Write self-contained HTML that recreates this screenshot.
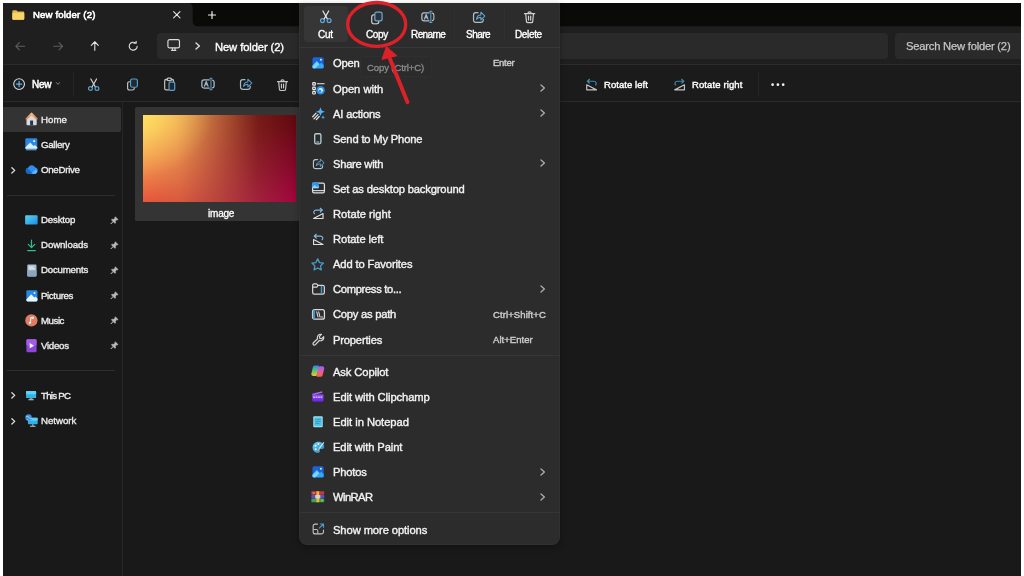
<!DOCTYPE html>
<html>
<head>
<meta charset="utf-8">
<title>New folder (2)</title>
<style>
html,body{margin:0;padding:0;background:#ffffff;}
body{width:1024px;height:576px;overflow:hidden;font-family:"Liberation Sans",sans-serif;}
#root{position:relative;width:1024px;height:576px;overflow:hidden;background:#ffffff;}
.a{position:absolute;}
.tx{position:absolute;height:20px;line-height:20px;white-space:pre;font-family:"Liberation Sans",sans-serif;will-change:transform;-webkit-text-stroke:0.3px currentColor;}
svg{position:absolute;overflow:visible;}
</style>
</head>

<body>
<div id="root">
<!-- window background -->
<div class="a" style="left:3px;top:3px;width:1018px;height:573px;background:#191919;"></div>
<!-- title bar -->
<div class="a" style="left:3px;top:3px;width:1018px;height:24px;background:#1f1f1f;"></div>
<!-- active tab -->
<svg style="left:0;top:0;" width="1024" height="30" viewBox="0 0 1024 30"><path d="M188,3 H1021 V26.3 H197.2 A4.5 4.5 0 0 1 192.7,21.8 V7.5 A4.5 4.5 0 0 0 188.2,3 Z" fill="#0a0a09"/></svg>
<!-- address row -->
<div class="a" style="left:3px;top:26.5px;width:1018px;height:37.5px;background:#1f1f1f;"></div>
<div class="a" style="left:157px;top:33px;width:731px;height:25.5px;background:#2a2a2a;border-radius:4px;"></div>
<div class="a" style="left:894.5px;top:33px;width:126.5px;height:25.5px;background:#2a2a2a;border-radius:4px 0 0 4px;"></div>
<div class="a" style="left:3px;top:64px;width:1018px;height:1px;background:#2b2b2b;"></div>
<!-- toolbar -->
<div class="a" style="left:3px;top:65px;width:1018px;height:36px;background:#1b1b1b;"></div>
<div class="a" style="left:3px;top:101px;width:1018px;height:1px;background:#2a2a2a;"></div>
<div class="a" style="left:73px;top:72px;width:1px;height:24px;background:#252525;"></div>
<div class="a" style="left:757.5px;top:72px;width:1px;height:24px;background:#252525;"></div>
<!-- sidebar -->
<div class="a" style="left:3px;top:102px;width:119px;height:474px;background:#191919;"></div>
<div class="a" style="left:122px;top:102px;width:1px;height:474px;background:#262626;"></div>
<div class="a" style="left:3px;top:107px;width:117.5px;height:25px;background:#333333;border-radius:0 2px 2px 0;"></div>
<div class="a" style="left:7px;top:195px;width:107.5px;height:1px;background:#2e2e2e;"></div>
<div class="a" style="left:7px;top:370px;width:107.5px;height:1px;background:#2e2e2e;"></div>
<!-- tile -->
<div class="a" style="left:135.4px;top:107px;width:166px;height:114.2px;background:#343434;border-radius:1.5px;"></div>
<div class="a" style="left:142.5px;top:115.3px;width:153.5px;height:86.4px;background:linear-gradient(to right,#e8553c 0%,#d8583f 25%,#b8423e 50%,#a2223c 75%,#a3053f 100%);"></div>
<div class="a" style="left:142.5px;top:115.3px;width:153.5px;height:86.4px;background:linear-gradient(to right,#ffe062 0%,#f0b257 22%,#b55c36 50%,#761c17 75%,#5f080f 100%);-webkit-mask-image:linear-gradient(to bottom,rgba(0,0,0,1) 0%,rgba(0,0,0,0.9) 15%,rgba(0,0,0,0) 100%);mask-image:linear-gradient(to bottom,rgba(0,0,0,1) 0%,rgba(0,0,0,0.9) 15%,rgba(0,0,0,0) 100%);"></div>
<div class="a" style="left:142.5px;top:115.3px;width:153.5px;height:86.4px;background:radial-gradient(ellipse 45% 70% at 0% 0%,rgba(255,226,100,0.55) 0%,rgba(255,210,95,0.3) 50%,rgba(255,200,90,0) 100%);"></div>

<div class="tx" style="left:32.7px;top:4.8px;font-size:9.6px;letter-spacing:0.16px;color:#ffffff;-webkit-text-stroke-width:0.6px;">New folder (2)</div>
<div class="tx" style="left:214.5px;top:36.5px;font-size:11.2px;letter-spacing:-0.09px;color:#ffffff;-webkit-text-stroke-width:0.35px;">New folder (2)</div>
<div class="tx" style="left:906.4px;top:36.4px;font-size:11.2px;letter-spacing:-0.21px;color:#c6c6c6;-webkit-text-stroke-width:0.25px;">Search New folder (2)</div>
<div class="tx" style="left:31.8px;top:74.5px;font-size:10px;letter-spacing:-0.27px;color:#ffffff;-webkit-text-stroke-width:0.5px;">New</div>
<div class="tx" style="left:603.8px;top:74.7px;font-size:9.5px;letter-spacing:0.06px;color:#ffffff;-webkit-text-stroke-width:0.4px;">Rotate left</div>
<div class="tx" style="left:692.3px;top:74.7px;font-size:9.5px;letter-spacing:0.11px;color:#ffffff;-webkit-text-stroke-width:0.4px;">Rotate right</div>
<div class="tx" style="left:41.0px;top:109.8px;font-size:9.7px;letter-spacing:0.01px;color:#ececec;-webkit-text-stroke-width:0.35px;">Home</div>
<div class="tx" style="left:41.0px;top:135.0px;font-size:9.7px;letter-spacing:-0.31px;color:#ececec;-webkit-text-stroke-width:0.35px;">Gallery</div>
<div class="tx" style="left:41.0px;top:160.0px;font-size:9.7px;letter-spacing:-0.28px;color:#ececec;-webkit-text-stroke-width:0.35px;">OneDrive</div>
<div class="tx" style="left:41.0px;top:210.2px;font-size:9.7px;letter-spacing:-0.18px;color:#ececec;-webkit-text-stroke-width:0.35px;">Desktop</div>
<div class="tx" style="left:41.0px;top:235.2px;font-size:9.7px;letter-spacing:-0.10px;color:#ececec;-webkit-text-stroke-width:0.35px;">Downloads</div>
<div class="tx" style="left:41.0px;top:260.4px;font-size:9.7px;letter-spacing:-0.22px;color:#ececec;-webkit-text-stroke-width:0.35px;">Documents</div>
<div class="tx" style="left:41.0px;top:285.5px;font-size:9.7px;letter-spacing:-0.38px;color:#ececec;-webkit-text-stroke-width:0.35px;">Pictures</div>
<div class="tx" style="left:41.0px;top:310.5px;font-size:9.7px;letter-spacing:-0.46px;color:#ececec;-webkit-text-stroke-width:0.35px;">Music</div>
<div class="tx" style="left:41.0px;top:335.7px;font-size:9.7px;letter-spacing:-0.29px;color:#ececec;-webkit-text-stroke-width:0.35px;">Videos</div>
<div class="tx" style="left:41.0px;top:385.7px;font-size:9.7px;letter-spacing:-0.75px;color:#ececec;-webkit-text-stroke-width:0.35px;">This PC</div>
<div class="tx" style="left:41.0px;top:411.0px;font-size:9.7px;letter-spacing:-0.03px;color:#ececec;-webkit-text-stroke-width:0.35px;">Network</div>
<div class="tx" style="left:208.0px;top:203.8px;font-size:10px;letter-spacing:-0.21px;color:#ffffff;-webkit-text-stroke-width:0.3px;">image</div>
<!-- shared icon symbols -->
<svg width="0" height="0" style="left:0;top:0;">
<defs>
<symbol id="i-cut" viewBox="0 0 16 16">
 <path d="M4.6 1.2 L10.2 11 M11.4 1.2 L5.8 11" fill="none" stroke="var(--w)" stroke-width="1.45" stroke-linecap="round"/>
 <circle cx="4.1" cy="12.5" r="2.3" fill="none" stroke="var(--b)" stroke-width="1.45"/>
 <circle cx="11.9" cy="12.5" r="2.3" fill="none" stroke="var(--b)" stroke-width="1.45"/>
</symbol>
<symbol id="i-copy" viewBox="0 0 16 16">
 <path d="M5.2 4.6 H4.2 A2.2 2.2 0 0 0 2 6.8 V12.6 A2.2 2.2 0 0 0 4.2 14.8 H8 A2.2 2.2 0 0 0 10.2 12.6 V12" fill="none" stroke="var(--w)" stroke-width="1.45" stroke-linecap="round"/>
 <rect x="5.6" y="1.2" width="8.4" height="10.2" rx="2.2" fill="var(--f)" stroke="var(--b)" stroke-width="1.45"/>
</symbol>
<symbol id="i-paste" viewBox="0 0 16 16" preserveAspectRatio="none">
 <path d="M5 2.8 H3.6 A1.6 1.6 0 0 0 2 4.4 V13 A1.6 1.6 0 0 0 3.6 14.6 H6.6 M10 2.8 H11 A1.6 1.6 0 0 1 12.6 4.4 V5.4" fill="none" stroke="var(--w)" stroke-width="1.45" stroke-linecap="round"/>
 <rect x="5" y="1.2" width="5" height="2.8" rx="1.1" fill="none" stroke="var(--w)" stroke-width="1.45"/>
 <rect x="7.2" y="5.8" width="6.8" height="9.2" rx="1.6" fill="var(--f)" stroke="var(--b)" stroke-width="1.45"/>
</symbol>
<symbol id="i-rename" viewBox="0 0 16 16">
 <path d="M9.4 3.4 H3.4 A2.4 2.4 0 0 0 1 5.8 V10.2 A2.4 2.4 0 0 0 3.4 12.6 H9.4 M13.2 3.6 A2.4 2.4 0 0 1 15 5.8 V10.2 A2.4 2.4 0 0 1 13.2 12.4" fill="var(--f)" stroke="var(--w)" stroke-width="1.45" stroke-linecap="round"/>
 <path d="M3.9 10.6 L6 5.2 L8.1 10.6 M4.7 8.9 H7.3" fill="none" stroke="var(--w)" stroke-width="1.25" stroke-linecap="round" stroke-linejoin="round"/>
 <path d="M11.4 1.9 V14.1 M10.2 1.5 H12.6 M10.2 14.5 H12.6" fill="none" stroke="var(--b)" stroke-width="1.15" stroke-linecap="round"/>
</symbol>
<symbol id="i-share" viewBox="0 0 16 16">
 <path d="M7 3.2 H4.4 A2.6 2.6 0 0 0 1.8 5.8 V12 A2.6 2.6 0 0 0 4.4 14.6 H10.6 A2.6 2.6 0 0 0 13.2 12 V11" fill="var(--f)" stroke="var(--w)" stroke-width="1.45" stroke-linecap="round"/>
 <path d="M5.4 11 C5.6 7.6 7.8 5.8 10.4 5.8 V2.6 L15.2 7.2 L10.4 11.6 V8.6 C8.4 8.6 6.8 9.2 5.4 11 Z" fill="var(--f)" stroke="var(--b)" stroke-width="1.2" stroke-linejoin="round"/>
</symbol>
<symbol id="i-delete" viewBox="0 0 16 16">
 <path d="M1.8 3.8 H14.2 M6 3.6 A2 2 0 0 1 10 3.6 M3.3 4 L4.2 13.2 A1.7 1.7 0 0 0 5.9 14.8 H10.1 A1.7 1.7 0 0 0 11.8 13.2 L12.7 4 M6.7 6.8 V11.6 M9.3 6.8 V11.6" fill="none" stroke="var(--w)" stroke-width="1.45" stroke-linecap="round" stroke-linejoin="round"/>
</symbol>
<symbol id="i-rotr" viewBox="0 0 16 16">
 <path d="M2 14.6 L14 8.4 V14.6 Z" fill="none" stroke="var(--w)" stroke-width="1.45" stroke-linejoin="round"/>
 <path d="M3.2 8.6 C1.6 7.6 1.8 4 5.4 4 H13 M10.6 1.6 L13.2 4 L10.6 6.4" fill="none" stroke="var(--b)" stroke-width="1.45" stroke-linecap="round" stroke-linejoin="round"/>
</symbol>
<symbol id="i-rotl" viewBox="0 0 16 16">
 <path d="M14 14.6 L2 8.4 V14.6 Z" fill="none" stroke="var(--w)" stroke-width="1.45" stroke-linejoin="round"/>
 <path d="M12.8 8.6 C14.4 7.6 14.2 4 10.6 4 H3 M5.4 1.6 L2.8 4 L5.4 6.4" fill="none" stroke="var(--b)" stroke-width="1.45" stroke-linecap="round" stroke-linejoin="round"/>
</symbol>
<symbol id="i-photo" viewBox="0 0 16 16">
 <rect x="0.4" y="0.4" width="15.2" height="15.2" rx="2.2" fill="#1b63d6"/>
 <path d="M0.4 11.2 L6.2 5.2 L10.4 9.4 L12.2 7.8 L15.6 11 V13.4 A2.2 2.2 0 0 1 13.4 15.6 H2.6 A2.2 2.2 0 0 1 0.4 13.4 Z" fill="#35a5f5"/>
 <path d="M0.4 12.4 L6.2 6.4 L9.6 9.8 L4 15.6 H2.6 A2.2 2.2 0 0 1 0.4 13.4 Z" fill="#7ad7ff"/>
 <circle cx="11.8" cy="3.8" r="1.3" fill="#d6f1ff"/>
</symbol>
<symbol id="i-pin" viewBox="0 0 16 16">
 <path d="M9.6 1.2 L14.8 6.4 L13.4 7.2 L12 7 L9.9 9.6 L10.3 12.4 L9 13.6 L6 10.6 L2 14.6 L1.4 14 L5.4 10 L2.4 7 L3.6 5.7 L6.4 6.1 L9 4 L8.8 2.6 Z" fill="#b4babd" stroke="#b4babd" stroke-width="0.9" stroke-linejoin="round"/>
</symbol>
<symbol id="i-chev" viewBox="0 0 16 16">
 <path d="M5.5 2.5 L11 8 L5.5 13.5" fill="none" stroke="currentColor" stroke-width="2" stroke-linecap="round" stroke-linejoin="round"/>
</symbol>
<symbol id="i-pc" viewBox="0 0 16 16">
 <rect x="0.8" y="1.6" width="14.4" height="10" rx="1.2" fill="#2fb4e9"/>
 <rect x="0.8" y="1.6" width="14.4" height="4.6" rx="1.2" fill="#5fd3f5"/>
 <rect x="6" y="11.6" width="4" height="1.8" fill="#8c9aa3"/>
 <rect x="4" y="13.2" width="8" height="1.3" rx="0.6" fill="#c4ced4"/>
</symbol>
</defs>
</svg>

<!-- title bar icons -->
<svg style="left:12.3px;top:9.6px;" width="12.6" height="10.2" viewBox="0 0 16 13">
 <path d="M0.4 1.6 A1.4 1.4 0 0 1 1.8 0.2 H5.4 L7.4 2 H14.2 A1.4 1.4 0 0 1 15.6 3.4 V11.2 A1.4 1.4 0 0 1 14.2 12.6 H1.8 A1.4 1.4 0 0 1 0.4 11.2 Z" fill="#e9b73d"/>
 <path d="M0.4 4.8 A1.2 1.2 0 0 1 1.6 3.6 H14.4 A1.2 1.2 0 0 1 15.6 4.8 V11.2 A1.4 1.4 0 0 1 14.2 12.6 H1.8 A1.4 1.4 0 0 1 0.4 11.2 Z" fill="#f8d568"/>
</svg>
<svg style="left:172.8px;top:11.2px;" width="7.6" height="7.6" viewBox="0 0 10 10"><path d="M0.8 0.8 L9.2 9.2 M9.2 0.8 L0.8 9.2" stroke="#e6e6e6" stroke-width="1.4" stroke-linecap="round"/></svg>
<svg style="left:207.8px;top:11px;" width="8" height="8" viewBox="0 0 10 10"><path d="M5 0.6 V9.4 M0.6 5 H9.4" stroke="#f0f0f0" stroke-width="1.5" stroke-linecap="round"/></svg>

<!-- nav icons -->
<svg style="left:14.6px;top:41.6px;" width="10.4" height="8.6" viewBox="0 0 12 10"><path d="M11.2 5 H1 M5 0.8 L0.9 5 L5 9.2" fill="none" stroke="#5e5e5e" stroke-width="1.3" stroke-linecap="round" stroke-linejoin="round"/></svg>
<svg style="left:52.6px;top:41.6px;" width="10.4" height="8.6" viewBox="0 0 12 10"><path d="M0.8 5 H11 M7 0.8 L11.1 5 L7 9.2" fill="none" stroke="#5e5e5e" stroke-width="1.3" stroke-linecap="round" stroke-linejoin="round"/></svg>
<svg style="left:90.3px;top:41.2px;" width="9.6" height="10" viewBox="0 0 10 12"><path d="M5 11.2 V1 M0.8 5.2 L5 0.9 L9.2 5.2" fill="none" stroke="#e4e4e4" stroke-width="1.3" stroke-linecap="round" stroke-linejoin="round"/></svg>
<svg style="left:128px;top:41px;" width="10.4" height="10.4" viewBox="0 0 12 12"><path d="M10.6 6 A4.6 4.6 0 1 1 8.6 2.2 M6.8 2.6 H9.4 V0.4" fill="none" stroke="#e0e0e0" stroke-width="1.3" stroke-linecap="round" stroke-linejoin="round"/></svg>
<svg style="left:166.8px;top:39px;" width="13.4" height="12.4" viewBox="0 0 16 15"><rect x="1" y="0.8" width="14" height="10" rx="2" fill="none" stroke="#dcdcdc" stroke-width="1.4"/><path d="M5.4 13.8 H10.6 M6.4 11 V13.6 M9.6 11 V13.6" stroke="#dcdcdc" stroke-width="1.3" stroke-linecap="round" fill="none"/></svg>
<svg style="left:195.0px;top:42.0px;" width="5.4" height="8.0" viewBox="0 0 5.4 8"><path d="M1 0.9 L4.4 4 L1 7.1" fill="none" stroke="#e0e0e0" stroke-width="1.35" stroke-linecap="round" stroke-linejoin="round"/></svg>

<!-- toolbar icons -->
<svg style="left:12.6px;top:77.6px;" width="12.2" height="12.2" viewBox="0 0 16 16"><circle cx="8" cy="8" r="7.1" fill="#13232e" stroke="#d6d6d6" stroke-width="1.45"/><path d="M8 4.4 V11.6 M4.4 8 H11.6" stroke="#8cc4e8" stroke-width="1.3" stroke-linecap="round"/></svg>
<svg style="left:56.2px;top:82.4px;" width="4" height="3.2" viewBox="0 0 8 6"><path d="M0.8 1 L4 4.6 L7.2 1" fill="none" stroke="#a8a8a8" stroke-width="1.5" stroke-linecap="round" stroke-linejoin="round"/></svg>

<svg style="left:87.4px;top:77.8px;--w:#d2d2d2;--b:#5a9ec8;--f:#1b1b1b;" width="13.4" height="13.4"><use href="#i-cut"/></svg>
<svg style="left:125.6px;top:77.6px;--w:#c6c6c6;--b:#5a9ec8;--f:#1d2a33;" width="13" height="13"><use href="#i-copy"/></svg>
<svg style="left:163px;top:77.4px;--w:#c2c2c2;--b:#5a9ec8;--f:#1d2a33;" width="13.4" height="14.2"><use href="#i-paste"/></svg>
<svg style="left:200.6px;top:77.4px;--w:#a9b9c4;--b:#5a9ec8;--f:#1b2227;" width="14" height="14"><use href="#i-rename"/></svg>
<svg style="left:238.6px;top:77.2px;--w:#a9b9c4;--b:#5a9ec8;--f:#1b1b1b;" width="13.6" height="13.6"><use href="#i-share"/></svg>
<svg style="left:276.2px;top:77.6px;--w:#c6c6c6;--b:#5a9ec8;--f:#1b1b1b;" width="13" height="14"><use href="#i-delete"/></svg>
<svg style="left:584.6px;top:78px;--w:#c4c4c4;--b:#3f86ad;" width="13.2" height="13"><use href="#i-rotl"/></svg>
<svg style="left:673.2px;top:78px;--w:#c4c4c4;--b:#3f86ad;" width="13.2" height="13"><use href="#i-rotr"/></svg>

<svg style="left:770.6px;top:82.6px;" width="14" height="3.4" viewBox="0 0 14 3.4"><circle cx="1.6" cy="1.7" r="1.35" fill="#f0f0f0"/><circle cx="6.9" cy="1.7" r="1.35" fill="#f0f0f0"/><circle cx="12.2" cy="1.7" r="1.35" fill="#f0f0f0"/></svg>

<!-- sidebar icons -->
<svg style="left:24.8px;top:112.4px;" width="13.2" height="13.6" viewBox="0 0 16 16.5">
 <defs><linearGradient id="hm1" x1="0" y1="0" x2="0" y2="1"><stop offset="0" stop-color="#f4c48a"/><stop offset="1" stop-color="#dd7a3c"/></linearGradient></defs>
 <path d="M1.8 8 V14.8 A1.2 1.2 0 0 0 3 16 H13 A1.2 1.2 0 0 0 14.2 14.8 V8 L8 2.6 Z" fill="#d6dae0"/>
 <path d="M0.4 8.2 L7.1 1.1 A1.3 1.3 0 0 1 8.9 1.1 L15.6 8.2 L14.4 9.8 L8 4.2 L1.6 9.8 Z" fill="url(#hm1)"/>
 <rect x="6.2" y="10.4" width="3.6" height="5.6" fill="#26344f"/>
</svg>
<svg style="left:25px;top:138.2px;" width="12.6" height="12.6" viewBox="0 0 16 16">
 <rect x="0.4" y="0.4" width="15.2" height="13.4" rx="1.6" fill="#2b86e0"/>
 <path d="M0.4 12 L6.6 5.8 L11 10.2 L12.6 8.8 L15.6 11.6 V13.8 H0.4 Z" fill="#d7f0ff"/>
 <circle cx="11.6" cy="4" r="1.4" fill="#cfeeff"/>
 <rect x="1.2" y="14.2" width="13.6" height="1.5" rx="0.7" fill="#79c4f5"/>
</svg>
<svg style="left:24.8px;top:165.2px;" width="13.6" height="9" viewBox="0 0 20 13">
 <path d="M5 12.6 A4.4 4.4 0 0 1 4.6 3.9 A5.6 5.6 0 0 1 14.8 3.2 A4.8 4.8 0 0 1 15.2 12.6 Z" fill="#2f8fee"/>
 <path d="M5 12.6 A4.4 4.4 0 0 1 3.2 4.4 L12 12.6 Z" fill="#1567c9"/>
 <path d="M9 12.6 L15.6 6.4 A3.4 3.4 0 0 1 16 12.6 Z" fill="#5fb8ff"/>
</svg>
<svg style="left:10.5px;top:166.5px;" width="4.6" height="6.8" viewBox="0 0 5.4 8"><path d="M1 0.9 L4.4 4 L1 7.1" fill="none" stroke="#e2e2e2" stroke-width="1.5" stroke-linecap="round" stroke-linejoin="round"/></svg>
<svg style="left:25px;top:215.2px;" width="12.8" height="9.6" viewBox="0 0 16 12">
 <defs><linearGradient id="dk1" x1="0" y1="0" x2="1" y2="1"><stop offset="0" stop-color="#5ad4f2"/><stop offset="1" stop-color="#1b8fe0"/></linearGradient></defs>
 <rect x="0.2" y="0.2" width="15.6" height="11.6" rx="1.2" fill="url(#dk1)"/>
</svg>
<svg style="left:27.2px;top:239.2px;" width="9" height="12.8" viewBox="0 0 10 13"><path d="M5 0.7 V8.6 M1.4 5.4 L5 9 L8.6 5.4 M0.7 12.2 H9.3" fill="none" stroke="#2fbf8f" stroke-width="1.35" stroke-linecap="round" stroke-linejoin="round"/></svg>
<svg style="left:26.8px;top:263.6px;" width="9.8" height="13" viewBox="0 0 10 13">
 <path d="M0.3 1.3 A1 1 0 0 1 1.3 0.3 H8.7 A1 1 0 0 1 9.7 1.3 V11.7 A1 1 0 0 1 8.7 12.7 H1.3 A1 1 0 0 1 0.3 11.7 Z" fill="#a9bfd3"/>
 <path d="M0.3 6.5 H9.7 V11.7 A1 1 0 0 1 8.7 12.7 H1.3 A1 1 0 0 1 0.3 11.7 Z" fill="#8aa6c0"/>
 <path d="M2.2 3 H6.4 M2.2 4.9 H7.6" stroke="#f2f6fa" stroke-width="1" stroke-linecap="round"/>
</svg>
<svg style="left:25.6px;top:289.6px;" width="11.8" height="11.6" viewBox="0 0 16 16">
 <rect x="0.3" y="0.3" width="15.4" height="15.4" rx="1.8" fill="#2686e2"/>
 <path d="M0.3 13 L7 6 L11.4 10.4 L13 9 L15.7 11.6 V13.9 A1.8 1.8 0 0 1 13.9 15.7 H2.1 A1.8 1.8 0 0 1 0.3 13.9 Z" fill="#e8f6ff"/>
 <circle cx="11.6" cy="4.2" r="1.4" fill="#d8f0ff"/>
</svg>
<svg style="left:24.8px;top:314.2px;" width="12.8" height="12.8" viewBox="0 0 16 16">
 <circle cx="8" cy="8" r="7.7" fill="#e07b64"/>
 <path d="M7 11 V4.6 L10.6 3.8 V5.4 L8 6" fill="none" stroke="#ffffff" stroke-width="1.1" stroke-linejoin="round"/>
 <ellipse cx="6.1" cy="11" rx="1.5" ry="1.2" fill="#ffffff"/>
</svg>
<svg style="left:25.8px;top:338.6px;" width="11" height="13.4" viewBox="0 0 11 14">
 <rect x="0.2" y="0.2" width="10.6" height="13.6" rx="1.3" fill="#8f45d8"/>
 <rect x="0.2" y="0.2" width="10.6" height="6.6" rx="1.3" fill="#a45be8"/>
 <path d="M3.6 4.2 L8.2 7 L3.6 9.8 Z" fill="#ffffff"/>
</svg>
<svg style="left:25.4px;top:390.2px;" width="12.2" height="11.2"><use href="#i-pc"/></svg>
<svg style="left:10.9px;top:392.3px;" width="4.6" height="6.8" viewBox="0 0 5.4 8"><path d="M1 0.9 L4.4 4 L1 7.1" fill="none" stroke="#e2e2e2" stroke-width="1.5" stroke-linecap="round" stroke-linejoin="round"/></svg>
<svg style="left:10.9px;top:417.7px;" width="4.6" height="6.8" viewBox="0 0 5.4 8"><path d="M1 0.9 L4.4 4 L1 7.1" fill="none" stroke="#e2e2e2" stroke-width="1.5" stroke-linecap="round" stroke-linejoin="round"/></svg>
<svg style="left:25px;top:414.4px;" width="13" height="13.4" viewBox="0 0 16 16.5">
 <rect x="3.6" y="4.6" width="12" height="8" rx="1" fill="#2fb0e6"/>
 <rect x="3.6" y="4.6" width="12" height="3.6" rx="1" fill="#5fd0f5"/>
 <rect x="8.6" y="12.6" width="2" height="2" fill="#8c9aa3"/>
 <rect x="6" y="14.4" width="7.2" height="1.3" rx="0.6" fill="#c4ced4"/>
 <circle cx="4.4" cy="4.4" r="4" fill="#3d8fe0"/>
 <path d="M1.2 3 C2.6 3.6 3.4 2.6 4.6 3.4 C5.6 4 5 5.2 6 5.6 C7 6 7.4 5.2 8.2 5.4 M2.6 7.6 C3 6.6 3.8 6.8 4.4 7.6" fill="none" stroke="#bfe3ff" stroke-width="0.9"/>
</svg>
<!-- pins -->
<svg style="left:110px;top:215.6px;" width="8.8" height="8.8"><use href="#i-pin"/></svg>
<svg style="left:110px;top:240.7px;" width="8.8" height="8.8"><use href="#i-pin"/></svg>
<svg style="left:110px;top:265.9px;" width="8.8" height="8.8"><use href="#i-pin"/></svg>
<svg style="left:110px;top:291px;" width="8.8" height="8.8"><use href="#i-pin"/></svg>
<svg style="left:110px;top:316.1px;" width="8.8" height="8.8"><use href="#i-pin"/></svg>
<svg style="left:110px;top:341.2px;" width="8.8" height="8.8"><use href="#i-pin"/></svg>

<!-- context menu -->
<div class="a" style="left:298.6px;top:3px;width:261.6px;height:541.5px;background:#2c2c2c;border-radius:0 0 8px 8px;box-shadow:0 2px 6px rgba(0,0,0,0.3);border:1px solid #313131;border-top:none;box-sizing:border-box;"></div>
<div class="a" style="left:303.5px;top:5.5px;width:44.5px;height:36.5px;background:#363636;border-radius:4px;"></div>
<div class="a" style="left:299.5px;top:47.3px;width:260.5px;height:1px;background:#383838;"></div>
<div class="a" style="left:299.5px;top:355px;width:260.5px;height:1px;background:#363636;"></div>
<div class="a" style="left:299.5px;top:512.4px;width:260.5px;height:1px;background:#363636;"></div>
<div class="a" style="left:360px;top:56.3px;width:72px;height:21.2px;background:#2b2b2b;border:1px solid #2f2f2f;border-radius:3px;box-sizing:border-box;"></div>

<div class="tx" style="left:318.0px;top:25.2px;font-size:10px;letter-spacing:-0.25px;color:#ffffff;-webkit-text-stroke-width:0.35px;">Cut</div>
<div class="tx" style="left:365.7px;top:25.2px;font-size:10px;letter-spacing:-0.39px;color:#ffffff;-webkit-text-stroke-width:0.35px;">Copy</div>
<div class="tx" style="left:410.5px;top:25.2px;font-size:10px;letter-spacing:-0.59px;color:#ffffff;-webkit-text-stroke-width:0.35px;">Rename</div>
<div class="tx" style="left:466.4px;top:25.2px;font-size:10px;letter-spacing:-0.54px;color:#ffffff;-webkit-text-stroke-width:0.35px;">Share</div>
<div class="tx" style="left:515.4px;top:25.2px;font-size:10px;letter-spacing:-0.35px;color:#ffffff;-webkit-text-stroke-width:0.35px;">Delete</div>
<div class="tx" style="left:366.8px;top:58.1px;font-size:9.5px;letter-spacing:-0.10px;color:#8c8c8c;-webkit-text-stroke-width:0.3px;">Copy (Ctrl+C)</div>
<div class="tx" style="left:332.9px;top:53.2px;font-size:11.2px;letter-spacing:-0.19px;color:#f2f2f2;-webkit-text-stroke-width:0.38px;">Open</div>
<div class="tx" style="left:332.9px;top:78.5px;font-size:11.2px;letter-spacing:-0.02px;color:#f2f2f2;-webkit-text-stroke-width:0.38px;">Open with</div>
<div class="tx" style="left:332.9px;top:103.5px;font-size:11.2px;letter-spacing:-0.17px;color:#f2f2f2;-webkit-text-stroke-width:0.38px;">AI actions</div>
<div class="tx" style="left:332.9px;top:128.7px;font-size:11.2px;letter-spacing:-0.17px;color:#f2f2f2;-webkit-text-stroke-width:0.38px;">Send to My Phone</div>
<div class="tx" style="left:332.9px;top:153.8px;font-size:11.2px;letter-spacing:-0.27px;color:#f2f2f2;-webkit-text-stroke-width:0.38px;">Share with</div>
<div class="tx" style="left:332.9px;top:178.8px;font-size:11.2px;letter-spacing:-0.16px;color:#f2f2f2;-webkit-text-stroke-width:0.38px;">Set as desktop background</div>
<div class="tx" style="left:332.9px;top:204.1px;font-size:11.2px;letter-spacing:-0.00px;color:#f2f2f2;-webkit-text-stroke-width:0.38px;">Rotate right</div>
<div class="tx" style="left:332.9px;top:229.2px;font-size:11.2px;letter-spacing:-0.07px;color:#f2f2f2;-webkit-text-stroke-width:0.38px;">Rotate left</div>
<div class="tx" style="left:332.9px;top:254.2px;font-size:11.2px;letter-spacing:-0.13px;color:#f2f2f2;-webkit-text-stroke-width:0.38px;">Add to Favorites</div>
<div class="tx" style="left:332.9px;top:279.4px;font-size:11.2px;letter-spacing:-0.32px;color:#f2f2f2;-webkit-text-stroke-width:0.38px;">Compress to...</div>
<div class="tx" style="left:332.9px;top:304.4px;font-size:11.2px;letter-spacing:-0.24px;color:#f2f2f2;-webkit-text-stroke-width:0.38px;">Copy as path</div>
<div class="tx" style="left:332.9px;top:329.6px;font-size:11.2px;letter-spacing:-0.19px;color:#f2f2f2;-webkit-text-stroke-width:0.38px;">Properties</div>
<div class="tx" style="left:332.9px;top:361.6px;font-size:11.2px;letter-spacing:-0.11px;color:#f2f2f2;-webkit-text-stroke-width:0.38px;">Ask Copilot</div>
<div class="tx" style="left:332.9px;top:386.6px;font-size:11.2px;letter-spacing:-0.08px;color:#f2f2f2;-webkit-text-stroke-width:0.38px;">Edit with Clipchamp</div>
<div class="tx" style="left:332.9px;top:411.8px;font-size:11.2px;letter-spacing:-0.04px;color:#f2f2f2;-webkit-text-stroke-width:0.38px;">Edit in Notepad</div>
<div class="tx" style="left:332.9px;top:436.9px;font-size:11.2px;letter-spacing:-0.11px;color:#f2f2f2;-webkit-text-stroke-width:0.38px;">Edit with Paint</div>
<div class="tx" style="left:332.9px;top:462.1px;font-size:11.2px;letter-spacing:-0.22px;color:#f2f2f2;-webkit-text-stroke-width:0.38px;">Photos</div>
<div class="tx" style="left:332.9px;top:487.1px;font-size:11.2px;letter-spacing:-0.58px;color:#f2f2f2;-webkit-text-stroke-width:0.38px;">WinRAR</div>
<div class="tx" style="left:332.9px;top:519.5px;font-size:11.2px;letter-spacing:-0.09px;color:#f2f2f2;-webkit-text-stroke-width:0.38px;">Show more options</div>
<div class="tx" style="left:493.4px;top:53.4px;font-size:9.5px;letter-spacing:-0.26px;color:#cccccc;-webkit-text-stroke-width:0.4px;">Enter</div>
<div class="tx" style="left:493.4px;top:304.6px;font-size:9.5px;letter-spacing:0.10px;color:#cccccc;-webkit-text-stroke-width:0.4px;">Ctrl+Shift+C</div>
<div class="tx" style="left:493.4px;top:329.7px;font-size:9.5px;letter-spacing:0.04px;color:#cccccc;-webkit-text-stroke-width:0.4px;">Alt+Enter</div>
<!-- menu top-row icons -->
<svg style="left:319.2px;top:9.6px;--w:#e6e6e6;--b:#62aad6;--f:#363636;" width="13.6" height="13.6"><use href="#i-cut"/></svg>
<svg style="left:370.4px;top:10.6px;--w:#c8ccd0;--b:#6ea6c9;--f:#2d3338;" width="13.8" height="13.8"><use href="#i-copy"/></svg>
<svg style="left:421.2px;top:10.2px;--w:#aebfcc;--b:#62aad6;--f:#2c3236;" width="13.8" height="13.8"><use href="#i-rename"/></svg>
<svg style="left:471.8px;top:10.2px;--w:#aebfcc;--b:#62aad6;--f:#2c2c2c;" width="13.6" height="13.6"><use href="#i-share"/></svg>
<svg style="left:523.2px;top:10.2px;--w:#d0d0d0;--b:#62aad6;--f:#2c2c2c;" width="13.2" height="14.2"><use href="#i-delete"/></svg>
<div class="a" style="left:453.6px;top:8px;width:1px;height:33px;background:#303030;"></div>
<div class="a" style="left:504.4px;top:8px;width:1px;height:33px;background:#303030;"></div>

<!-- menu item icons -->
<svg style="left:311.8px;top:57.2px;" width="12.2" height="11.8"><use href="#i-photo"/></svg>
<svg style="left:311.6px;top:82.2px;" width="13" height="12.8" viewBox="0 0 16 16">
 <rect x="0.8" y="0.8" width="3.2" height="3.2" rx="0.9" fill="none" stroke="#ececec" stroke-width="1.5"/>
 <rect x="0.8" y="6.3" width="3.2" height="3.2" rx="0.9" fill="none" stroke="#ececec" stroke-width="1.5"/>
 <rect x="0.8" y="11.8" width="3.2" height="3.2" rx="0.9" fill="none" stroke="#ececec" stroke-width="1.5"/>
 <path d="M6.6 2.2 H15" stroke="#ececec" stroke-width="1.5" stroke-linecap="round"/>
 <circle cx="10.6" cy="10.4" r="5.3" fill="#2a8fe6"/>
 <circle cx="10.6" cy="10.4" r="2.9" fill="#e9f6ff"/>
 <circle cx="9.8" cy="11.2" r="1.9" fill="#2a8fe6"/>
</svg>
<svg style="left:311.6px;top:106.6px;" width="13" height="13" viewBox="0 0 16 16">
 <path d="M10.4 0.4 L11.9 4.3 L15.8 5.8 L11.9 7.3 L10.4 11.2 L8.9 7.3 L5 5.8 L8.9 4.3 Z" fill="#4fb3ff"/>
 <path d="M13.6 10.2 L14.3 11.9 L16 12.6 L14.3 13.3 L13.6 15 L12.9 13.3 L11.2 12.6 L12.9 11.9 Z" fill="#4fb3ff"/>
 <path d="M0.9 12 L5 7.6 M2.4 14.6 L7.4 9.4 M5.4 15.4 L9 11.6" fill="none" stroke="#e4e4e4" stroke-width="1.55" stroke-linecap="round"/>
</svg>
<svg style="left:314.2px;top:132.8px;" width="7.6" height="11.6" viewBox="0 0 10 15">
 <rect x="0.9" y="0.9" width="8.2" height="13.2" rx="1.9" fill="none" stroke="#b4ccd6" stroke-width="1.75"/>
 <path d="M3.6 11.6 H6.4" stroke="#b4ccd6" stroke-width="1.4" stroke-linecap="round"/>
</svg>
<svg style="left:311.8px;top:157.4px;--w:#b4c4d0;--b:#62aad6;--f:#2c2c2c;" width="12.8" height="12.8"><use href="#i-share"/></svg>
<svg style="left:311.8px;top:181.8px;" width="13" height="11.8" viewBox="0 0 16 14.5">
 <rect x="0.7" y="1.4" width="14.6" height="12" rx="2" fill="none" stroke="#e0e0e0" stroke-width="1.5"/>
 <path d="M1 10.6 H15" stroke="#e0e0e0" stroke-width="1.38"/>
 <rect x="0.2" y="0.2" width="8.2" height="7.6" rx="1.4" fill="#2f96ea"/>
 <path d="M0.4 6.6 L3.4 3.6 L6 6.2 L8.2 4.4 V7.8 H0.4 Z" fill="#8bd6ff"/>
</svg>
<svg style="left:311.8px;top:207.4px;--w:#e0e0e0;--b:#7fb8dc;" width="12.6" height="12.6"><use href="#i-rotr"/></svg>
<svg style="left:311.8px;top:232.6px;--w:#e0e0e0;--b:#7fb8dc;" width="12.6" height="12.6"><use href="#i-rotl"/></svg>
<svg style="left:311.4px;top:257.6px;" width="13.4" height="13" viewBox="0 0 16 15.5">
 <path d="M8 1 L10.1 5.4 L14.9 6 L11.4 9.4 L12.3 14.2 L8 11.9 L3.7 14.2 L4.6 9.4 L1.1 6 L5.9 5.4 Z" fill="none" stroke="#4b9fc7" stroke-width="1.56" stroke-linejoin="round"/>
</svg>
<svg style="left:311.8px;top:283px;" width="13" height="11.8" viewBox="0 0 16 14.5">
 <path d="M0.8 3 A2 2 0 0 1 2.8 1 H5.6 L7.4 2.8 H13.2 A2 2 0 0 1 15.2 4.8 V11.6 A2 2 0 0 1 13.2 13.6 H2.8 A2 2 0 0 1 0.8 11.6 Z" fill="none" stroke="#d8d8d8" stroke-width="1.5" stroke-linejoin="round"/>
 <path d="M0.8 5 H6 L7.4 3" fill="none" stroke="#d8d8d8" stroke-width="1.38"/>
 <rect x="10.8" y="3.6" width="1.8" height="9.4" fill="#4f98c4"/>
</svg>
<svg style="left:311.8px;top:308.8px;" width="13" height="10.8" viewBox="0 0 16 13">
 <rect x="0.7" y="0.7" width="14.6" height="11.6" rx="2.4" fill="none" stroke="#dcdcdc" stroke-width="1.56"/>
 <path d="M1 3 A2.2 2.2 0 0 1 3 0.8 H3.8 V12.2 H3 A2.2 2.2 0 0 1 1 10 Z" fill="#4590bd"/>
 <path d="M5.8 3.4 L7.4 9.6 M8.2 3.4 L9.8 9.6 M11.2 9.6 H13" stroke="#dcdcdc" stroke-width="1.31" stroke-linecap="round"/>
</svg>
<svg style="left:311.6px;top:333.4px;" width="13" height="13" viewBox="0 0 16 16">
 <path d="M14.4 4.6 A4 4 0 0 1 9 9.2 L4.2 14.4 A1.7 1.7 0 0 1 1.7 12 L6.9 7.1 A4 4 0 0 1 11.6 1.7 L9.2 4.2 L9.6 6.5 L11.9 6.9 Z" fill="none" stroke="#d4d4d4" stroke-width="1.5" stroke-linejoin="round"/>
</svg>

<!-- copilot -->
<svg style="left:311.2px;top:364.8px;" width="13.6" height="12.4" viewBox="0 0 18 16">
 <defs>
  <linearGradient id="cp1" x1="0" y1="0" x2="0" y2="1"><stop offset="0" stop-color="#2f86ee"/><stop offset="0.5" stop-color="#5cc46a"/><stop offset="1" stop-color="#f6c52c"/></linearGradient>
  <linearGradient id="cp2" x1="0" y1="0" x2="0" y2="1"><stop offset="0" stop-color="#a25df0"/><stop offset="0.5" stop-color="#e65aa8"/><stop offset="1" stop-color="#f5672c"/></linearGradient>
 </defs>
 <path d="M5 0.6 H9.2 C10.4 0.6 10.8 1.4 10.6 2.4 L8.4 12 C8 13.6 7 14.4 5.6 14.4 H3.2 C1.2 14.4 0 12.8 0.6 10.8 L2.4 3.2 C2.8 1.6 3.6 0.6 5 0.6 Z" fill="url(#cp1)"/>
 <path d="M12.4 1.6 H14.8 C16.8 1.6 18 3.2 17.4 5.2 L15.6 12.8 C15.2 14.4 14.4 15.4 13 15.4 H8.8 C7.6 15.4 7.2 14.6 7.4 13.6 L9.6 4 C10 2.4 11 1.6 12.4 1.6 Z" fill="url(#cp2)"/>
</svg>
<!-- clipchamp -->
<svg style="left:312.2px;top:391px;" width="11.8" height="10.8" viewBox="0 0 16 14.6">
 <defs><linearGradient id="cc1" x1="0" y1="0" x2="0" y2="1"><stop offset="0" stop-color="#9a55f5"/><stop offset="1" stop-color="#6224d8"/></linearGradient></defs>
 <path d="M0.4 3.6 L13.6 0.3 L14.2 2.4 L1 5.6 Z" fill="#a46af8"/>
 <path d="M0.4 4.8 H15.6 V12.4 A2 2 0 0 1 13.6 14.4 H2.4 A2 2 0 0 1 0.4 12.4 Z" fill="url(#cc1)"/>
 <path d="M1.6 8.4 H14.4" stroke="#cfb2ff" stroke-width="2.2" stroke-dasharray="2.4 0.9"/>
</svg>
<!-- notepad -->
<svg style="left:313px;top:416.4px;" width="10" height="11.6" viewBox="0 0 12 14">
 <rect x="0.3" y="0.3" width="11.4" height="13.4" rx="1.2" fill="#9fe3f6"/>
 <rect x="1.6" y="1.8" width="8.8" height="10.4" fill="#4fc2e6"/>
 <path d="M2.8 4.2 H9.2 M2.8 6.6 H9.2 M2.8 9 H7.6" stroke="#2a90b8" stroke-width="0.9"/>
</svg>
<!-- paint -->
<svg style="left:311.8px;top:440.8px;" width="12.8" height="12.6" viewBox="0 0 16 16">
 <defs><linearGradient id="pt1" x1="0" y1="0" x2="1" y2="1"><stop offset="0" stop-color="#6fd6f2"/><stop offset="1" stop-color="#1a7fd0"/></linearGradient></defs>
 <path d="M8 0.8 C12.4 0.8 15.4 3.6 15.4 7 C15.4 9.4 13.6 10.4 11.8 10.2 C10.2 10 9.4 10.8 9.8 12.2 C10.2 13.8 9.4 15.2 7.4 15.2 C3.6 15.2 0.6 12 0.6 8 C0.6 4 3.8 0.8 8 0.8 Z" fill="url(#pt1)"/>
 <circle cx="4.4" cy="6" r="1.3" fill="#e8f8ff"/><circle cx="8" cy="3.8" r="1.3" fill="#e8f8ff"/><circle cx="4.6" cy="10.4" r="1.3" fill="#e8f8ff"/>
 <path d="M15.4 2.2 L9.8 9.8 L8.2 10.8 L8.6 9 L14.4 1.4 Z" fill="#d9e6ee"/>
 <path d="M8.6 9 L9.8 9.8 L8 12.6 C7.4 13.4 6.4 13 6.8 12 Z" fill="#f0a53a"/>
</svg>
<!-- photos -->
<svg style="left:311.8px;top:466.2px;" width="12.2" height="11.8"><use href="#i-photo"/></svg>
<!-- winrar -->
<svg style="left:311px;top:491px;" width="13.6" height="11.6" viewBox="0 0 16 13.6">
 <rect x="0.4" y="0.3" width="15.2" height="4.1" rx="0.8" fill="#c43a3a"/>
 <rect x="0.4" y="4.7" width="15.2" height="4.1" rx="0.8" fill="#5b4fc8"/>
 <rect x="0.4" y="9.1" width="15.2" height="4.1" rx="0.8" fill="#3fa34b"/>
 <rect x="6.4" y="0.3" width="3.2" height="12.9" fill="#e8b93a"/>
 <rect x="5" y="4.6" width="6" height="4.3" rx="0.6" fill="#d9d2c2"/>
 <rect x="2" y="1.2" width="2.4" height="2.2" fill="#e78a8a" opacity="0.7"/><rect x="11.8" y="10" width="2.4" height="2.2" fill="#8ad08f" opacity="0.7"/>
</svg>
<!-- show more -->
<svg style="left:311.8px;top:523.2px;" width="12.6" height="12" viewBox="0 0 16 15.4">
 <path d="M7 1.4 H4 A2.6 2.6 0 0 0 1.4 4 V11.4 A2.6 2.6 0 0 0 4 14 H12 A2.6 2.6 0 0 0 14.6 11.4 V9" fill="none" stroke="#c2c2c2" stroke-width="1.4" stroke-linecap="round"/>
 <path d="M1.6 8.2 H5.4 A2 2 0 0 1 7.4 10.2 V13.8" fill="none" stroke="#c2c2c2" stroke-width="1.3"/>
 <path d="M9.2 6.6 L14.4 1.6 M10.6 1.3 H14.7 V5.4" fill="none" stroke="#4f9ccb" stroke-width="1.45" stroke-linecap="round" stroke-linejoin="round"/>
</svg>

<!-- submenu chevrons -->
<svg style="left:539.9px;top:84.1px;" width="5.4" height="8.0" viewBox="0 0 5.4 8"><path d="M1 0.9 L4.4 4 L1 7.1" fill="none" stroke="#adadad" stroke-width="1.3" stroke-linecap="round" stroke-linejoin="round"/></svg>
<svg style="left:539.9px;top:109.2px;" width="5.4" height="8.0" viewBox="0 0 5.4 8"><path d="M1 0.9 L4.4 4 L1 7.1" fill="none" stroke="#adadad" stroke-width="1.3" stroke-linecap="round" stroke-linejoin="round"/></svg>
<svg style="left:539.9px;top:159.4px;" width="5.4" height="8.0" viewBox="0 0 5.4 8"><path d="M1 0.9 L4.4 4 L1 7.1" fill="none" stroke="#adadad" stroke-width="1.3" stroke-linecap="round" stroke-linejoin="round"/></svg>
<svg style="left:539.9px;top:285.0px;" width="5.4" height="8.0" viewBox="0 0 5.4 8"><path d="M1 0.9 L4.4 4 L1 7.1" fill="none" stroke="#adadad" stroke-width="1.3" stroke-linecap="round" stroke-linejoin="round"/></svg>
<svg style="left:539.9px;top:467.7px;" width="5.4" height="8.0" viewBox="0 0 5.4 8"><path d="M1 0.9 L4.4 4 L1 7.1" fill="none" stroke="#adadad" stroke-width="1.3" stroke-linecap="round" stroke-linejoin="round"/></svg>
<svg style="left:539.9px;top:492.8px;" width="5.4" height="8.0" viewBox="0 0 5.4 8"><path d="M1 0.9 L4.4 4 L1 7.1" fill="none" stroke="#adadad" stroke-width="1.3" stroke-linecap="round" stroke-linejoin="round"/></svg>

<!-- red annotation -->
<svg class="a" style="left:0;top:0;" width="1024" height="576" viewBox="0 0 1024 576">
<ellipse cx="376.7" cy="24.4" rx="29" ry="21.9" fill="none" stroke="#dc2128" stroke-width="3.3"/>
<line x1="407.5" y1="102.3" x2="390" y2="59" stroke="#dc2128" stroke-width="3.9" stroke-linecap="round"/>
<polygon points="386.4,46.6 382,59.4 396.8,55.8" fill="#dc2128" stroke="#dc2128" stroke-width="1" stroke-linejoin="round"/>
</svg>

</div>
</body>
</html>
